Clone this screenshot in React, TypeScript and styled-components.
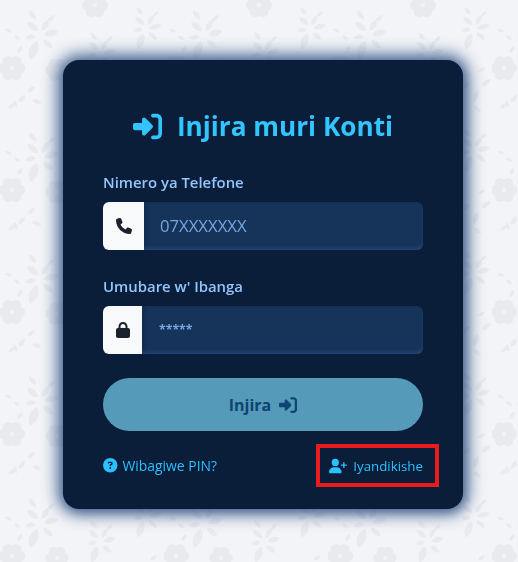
import React from "react";
import styled, { createGlobalStyle } from "styled-components";
import { FaRightToBracket, FaPhone, FaLock, FaUserPlus, FaCircleQuestion } from "react-icons/fa6";

const Global = createGlobalStyle`
  html, body { margin: 0; padding: 0; background: #f3f4f7; }
  * { box-sizing: border-box; }
`;

const Wallpaper = styled.svg`
  position: fixed;
  inset: 0;
  width: 100%;
  height: 100%;
  z-index: 0;
`;

const Page = styled.main`
  position: relative;
  z-index: 1;
  height: 562px;
  display: flex;
  justify-content: center;
  padding: 60px 0 0 8px;
  font-family: "Open Sans", "Noto Sans", sans-serif;
`;

const Card = styled.section`
  width: 400px;
  height: 449px;
  padding: 46px 40px 0;
  background: #0a1d39;
  border-radius: 16px;
  box-shadow: 0 0 16px 5px rgba(28, 68, 125, 0.85), 2px 3px 8px rgba(20, 30, 60, 0.2);
  display: flex;
  flex-direction: column;
`;

const Title = styled.h1`
  margin: 0 0 26px;
  height: 40px;
  display: flex;
  align-items: center;
  justify-content: center;
  gap: 15px;
  color: #33c5ff;
  font-size: 26.2px;
  font-weight: 700;
  line-height: 40px;
  svg { font-size: 29px; }
`;

const Label = styled.label`
  display: block;
  height: 20px;
  margin-bottom: 10px;
  color: #93c5fd;
  font-size: 14.9px;
  font-weight: 600;
  line-height: 20px;
`;

const Field = styled.div`
  display: flex;
  height: 48px;
  margin-bottom: 26px;
`;

const Addon = styled.span<{ $w: number }>`
  flex: none;
  width: ${(p) => p.$w}px;
  display: flex;
  align-items: center;
  justify-content: center;
  background: #f8f9fa;
  color: #1a202c;
  font-size: 16px;
  border-radius: 6px 0 0 6px;
`;

const Input = styled.input<{ $stars?: boolean }>`
  flex: 1;
  min-width: 0;
  height: 48px;
  border: 0;
  outline: 0;
  padding: ${(p) => (p.$stars ? "0 0 2px 17px" : "0 0 2px 16px")};
  background: #16335a;
  border-radius: 0 6px 6px 0;
  box-shadow: inset 0 -3px 5px -2px rgba(59, 105, 165, 0.55), inset 4px 0 5px -3px rgba(10, 29, 57, 0.7);
  font-family: inherit;
  font-size: ${(p) => (p.$stars ? 12.3 : 16.7)}px;
  &::placeholder { color: #76a6e0; opacity: 1; font-weight: ${(p) => (p.$stars ? 700 : 400)}; }
`;

const Submit = styled.button`
  height: 53px;
  margin-top: -2px;
  border: 0;
  border-radius: 27px;
  background: #559ab9;
  color: #0d4471;
  display: flex;
  align-items: center;
  justify-content: center;
  gap: 8px;
  font-family: inherit;
  font-size: 16px;
  font-weight: 700;
  svg { font-size: 18px; }
`;

const Footer = styled.nav`
  display: flex;
  justify-content: space-between;
  align-items: center;
  height: 43px;
  margin: 13px -16px 0 0;
`;

const Link = styled.a<{ $marked?: boolean }>`
  display: inline-flex;
  align-items: center;
  gap: ${(p) => (p.$marked ? 6 : 5)}px;
  height: 43px;
  color: #2cc0ff;
  font-size: ${(p) => (p.$marked ? 13.3 : 13.9)}px;
  text-decoration: none;
  border: ${(p) => (p.$marked ? "4px solid #e81c1c" : "0")};
  padding: ${(p) => (p.$marked ? "0 12px 0 9px" : "0")};
  svg { font-size: ${(p) => (p.$marked ? 18 : 14.5)}px; }
`;

const Leaf = ({ x, y, len, a }: { x: number; y: number; len: number; a: number }) => (
  <path
    transform={`translate(${x} ${y}) rotate(${a})`}
    d={`M0 0C${len * 0.3} ${-len * 0.3} ${len * 0.7} ${-len * 0.28} ${len} 0C${len * 0.7} ${len * 0.28} ${len * 0.3} ${len * 0.3} 0 0Z`}
  />
);

const Flower = ({ x, y, r = 1 }: { x: number; y: number; r?: number }) => (
  <g transform={`translate(${x} ${y}) scale(${r})`}>
    {[0, 60, 120, 180, 240, 300].map((a) => (
      <circle key={a} cx={7.5 * Math.cos((a * Math.PI) / 180)} cy={7.5 * Math.sin((a * Math.PI) / 180)} r="5.6" />
    ))}
    <circle r="6" />
    <circle r="2.2" fill="#f1f2f5" />
  </g>
);

const Sprig = ({ x, y, r = 1 }: { x: number; y: number; r?: number }) => (
  <g transform={`translate(${x} ${y}) scale(${r})`}>
    <Leaf x={-2} y={-6} len={14} a={-140} />
    <Leaf x={2} y={-6} len={13} a={-60} />
    <Leaf x={4} y={-2} len={15} a={-15} />
    <Leaf x={3} y={3} len={13} a={40} />
    <Leaf x={-3} y={4} len={20} a={110} />
    <Leaf x={-4} y={-1} len={11} a={170} />
    <Leaf x={-4} y={-18} len={11} a={-130} />
    <Leaf x={8} y={-16} len={9} a={-40} />
  </g>
);

export default function App() {
  return (
    <>
      <Global />
      <Wallpaper aria-hidden="true">
        <defs>
          <filter id="soft"><feGaussianBlur stdDeviation="0.5" /></filter>
          <pattern id="floral" width="164" height="122" patternUnits="userSpaceOnUse">
            <g fill="#e9eaee" filter="url(#soft)">
              <Flower x={12} y={68} />
              <Flower x={57} y={70} r={0.9} />
              <Flower x={95} y={5} />
              <Flower x={95} y={127} />
              <Sprig x={40} y={37} />
              <Sprig x={100} y={55} r={0.85} />
              <Sprig x={146} y={30} r={0.85} />
              <Leaf x={12} y={32} len={7} a={200} />
              <Leaf x={14} y={36} len={7} a={30} />
              <Leaf x={22} y={46} len={8} a={120} />
              <Leaf x={25} y={95} len={10} a={130} />
              <Leaf x={28} y={92} len={9} a={-40} />
              <Leaf x={32} y={100} len={10} a={20} />
              <Leaf x={8} y={108} len={9} a={-30} />
              <Leaf x={14} y={100} len={8} a={70} />
              <Leaf x={150} y={72} len={8} a={-30} />
              <Leaf x={142} y={82} len={11} a={140} />
              <Leaf x={150} y={90} len={13} a={110} />
              <Leaf x={154} y={86} len={11} a={-40} />
              <Leaf x={146} y={106} len={9} a={40} />
            </g>
          </pattern>
        </defs>
        <rect width="100%" height="100%" fill="url(#floral)" />
      </Wallpaper>
      <Page>
        <Card>
          <Title>
            <FaRightToBracket />
            Injira muri Konti
          </Title>
          <Label>Nimero ya Telefone</Label>
          <Field>
            <Addon $w={41}><FaPhone /></Addon>
            <Input placeholder="07XXXXXXX" />
          </Field>
          <Label>Umubare w' Ibanga</Label>
          <Field>
            <Addon $w={39}><FaLock /></Addon>
            <Input $stars placeholder="*****" />
          </Field>
          <Submit>
            Injira <FaRightToBracket />
          </Submit>
          <Footer>
            <Link><FaCircleQuestion /> Wibagiwe PIN?</Link>
            <Link $marked><FaUserPlus /> Iyandikishe</Link>
          </Footer>
        </Card>
      </Page>
    </>
  );
}
